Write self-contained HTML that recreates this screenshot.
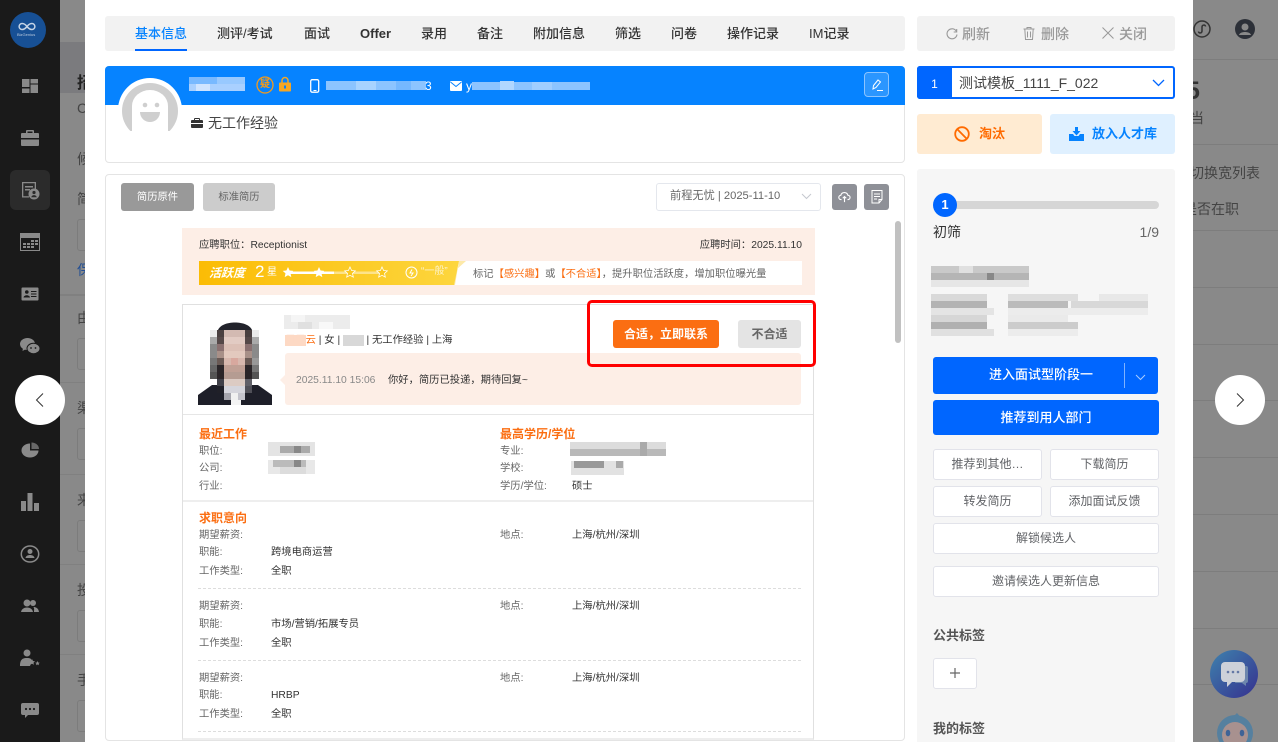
<!DOCTYPE html>
<html><head><meta charset="utf-8"><style>
html,body{margin:0;padding:0;width:1278px;height:742px;overflow:hidden;background:#898989}
body{font-family:"Liberation Sans","Noto Sans CJK SC",sans-serif;position:relative}
div,svg{position:absolute;box-sizing:border-box}
.t{position:absolute;white-space:nowrap;line-height:16px;height:16px}
.l{font-size:10.3px;color:#666;margin-top:2px}
.v{font-size:10.3px;color:#333;margin-top:2px}
.h{font-size:12px;color:#fb6e12;font-weight:700}
.tab{font-size:13px;color:#333;font-weight:500;top:26px}
.tool{font-size:14px;color:#999;font-weight:500;top:26px}
.btn{background:#fff;border:1px solid #e2e3ea;border-radius:3px;text-align:center;font-size:12px;color:#606266;line-height:28px;white-space:nowrap}
.ln{left:1193px;width:85px;height:1px;background:#7d7d7d}
.sl{left:60px;width:25px;height:1px;background:#808080}
.ip{left:77px;width:12px;height:32px;border:1px solid #7c7c7c;border-radius:3px}
.sg{font-size:14px;color:#444;left:77px}
.ic{left:20px;width:20px;height:20px;fill:#8a8a8a}
</style></head><body>

<!-- dimmed page right -->
<div class="ln" style="top:59px"></div><div class="ln" style="top:144px"></div><div class="ln" style="top:230px"></div>
<div class="ln" style="top:287px"></div><div class="ln" style="top:344px"></div><div class="ln" style="top:400px"></div>
<div class="ln" style="top:457px"></div><div class="ln" style="top:514px"></div><div class="ln" style="top:571px"></div><div class="ln" style="top:628px"></div><div class="ln" style="top:684px"></div>
<div class="t" style="left:1186px;top:81px;font-size:25px;color:#333;font-weight:700;line-height:20px;height:20px">5</div>
<div class="t" style="left:1190px;top:110px;font-size:14px;color:#444">当</div>
<div class="t" style="left:1190px;top:165px;font-size:14px;color:#444">切换宽列表</div>
<div class="t" style="left:1183px;top:201px;font-size:14px;color:#444">是否在职</div>
<svg style="left:1193px;top:19px" width="20" height="20" viewBox="0 0 20 20" fill="none" stroke="#333" stroke-width="1.5"><circle cx="9" cy="10" r="8"/><path d="M5.500 12.500c0 2 3.500 2 3.500-.5V8c0-2.500 3.500-2.500 3.500-.5"/></svg>
<svg style="left:1235px;top:19px" width="20" height="20" viewBox="0 0 20 20"><circle cx="10" cy="10" r="10" fill="#2c3038"/><circle cx="10" cy="8" r="3.500" fill="#898989"/><path d="M4 16c1-4 11-4 12 0z" fill="#898989"/></svg>
<svg style="left:1210px;top:650px" width="48" height="48" viewBox="0 0 48 48"><defs><linearGradient id="cg" x1="0" y1="0" x2="1" y2="1"><stop offset="0" stop-color="#3f82ad"/><stop offset="1" stop-color="#35308f"/></linearGradient></defs><circle cx="24" cy="24" r="24" fill="url(#cg)"/><path d="M30 16h6a2 2 0 0 1 2 2v13a2 2 0 0 1-2 2v3l-4-3h-7z" fill="#6d86ad"/><rect x="11" y="12" width="24" height="20" rx="4" fill="#cdd1d9"/><path d="M17 31v6l6-6z" fill="#cdd1d9"/><circle cx="18" cy="22" r="1.300" fill="#6478a5"/><circle cx="23" cy="22" r="1.300" fill="#6478a5"/><circle cx="28" cy="22" r="1.300" fill="#6478a5"/></svg>
<svg style="left:1217px;top:713px" width="36" height="29" viewBox="0 0 36 29"><circle cx="18" cy="20" r="18" fill="#55809f"/><path d="M20 0l5 6h-11z" fill="#55809f"/><circle cx="18" cy="22" r="13" fill="#a8918f"/><ellipse cx="11" cy="20" rx="2.300" ry="3.300" fill="#3f6396"/><ellipse cx="25" cy="20" rx="2.300" ry="3.300" fill="#3f6396"/></svg>

<!-- dimmed left sliver -->
<div style="left:60px;top:42px;width:25px;height:51px;background:#7b7b7e"></div>
<div class="t" style="left:77px;top:76px;font-size:16px;font-weight:700;color:#222">招</div>
<div class="t" style="left:77px;top:100px;font-size:14px;color:#444">C</div>
<div class="t sg" style="top:151px">候</div>
<div class="t sg" style="top:191px">简</div>
<div class="ip" style="top:219px"></div>
<div class="t sg" style="top:262px;color:#234f94">保</div>
<div class="sl" style="top:294px;height:2px"></div>
<div class="t sg" style="top:310px">由</div><div class="ip" style="top:338px"></div><div class="sl" style="top:382px"></div>
<div class="t sg" style="top:400px">渠</div><div class="ip" style="top:428px"></div><div class="sl" style="top:474px"></div>
<div class="t sg" style="top:492px">来</div><div class="ip" style="top:520px"></div><div class="sl" style="top:564px"></div>
<div class="t sg" style="top:582px">投</div><div class="ip" style="top:610px"></div><div class="sl" style="top:654px"></div>
<div class="t sg" style="top:672px">手</div><div class="ip" style="top:700px"></div>

<!-- sidebar -->
<div style="left:0;top:0;width:60px;height:742px;background:#1a1a1a"></div>
<div style="left:10px;top:12px;width:36px;height:36px;border-radius:50%;background:#175095"></div>
<svg style="left:17px;top:22px" width="20" height="9" viewBox="0 0 24 12" fill="none" stroke="#c5d4e6" stroke-width="2"><path d="M12 6C9 2 7 2 5.500 2a4 4 0 0 0 0 8c1.500 0 3.500 0 6.500-4s5-4 6.500-4a4 4 0 0 1 0 8c-1.500 0-3.500 0-6.500-4z"/></svg>
<div class="t" style="left:17px;top:27px;font-size:4px;color:#b9c9dd">BizGenius</div>
<div style="left:10px;top:170px;width:40px;height:40px;border-radius:6px;background:#2b2b2b"></div>

<svg class="ic" style="top:76px" viewBox="0 0 20 20"><rect x="2" y="3" width="7.500" height="8"/><rect x="2" y="12.500" width="7.500" height="4.500"/><rect x="10.500" y="3" width="7.500" height="4.500"/><rect x="10.500" y="8.500" width="7.500" height="8.500"/></svg>
<svg class="ic" style="top:128px" viewBox="0 0 20 20"><path d="M7 2h6a1 1 0 0 1 1 1v2h4a1 1 0 0 1 1 1v4H1V6a1 1 0 0 1 1-1h4V3a1 1 0 0 1 1-1zm.500 1.500V5h5V3.500zM1 11.500h18V17a1 1 0 0 1-1 1H2a1 1 0 0 1-1-1z"/></svg>
<svg class="ic" style="top:180px" viewBox="0 0 20 20"><path d="M2 2h14v8h-1.300V3.300H3.300v12.900H9v1.300H2z"/><rect x="5" y="6" width="8" height="1.500"/><rect x="5" y="9" width="5" height="1.500"/><circle cx="14" cy="14" r="5.500"/><circle cx="14" cy="12.500" r="1.600" fill="#2b2b2b"/><path d="M11.300 17.200c.5-2.800 4.900-2.800 5.400 0z" fill="#2b2b2b"/></svg>
<svg class="ic" style="top:232px" viewBox="0 0 20 20"><path d="M0 1h20v18H0zm1 5v12h18V6z"/><path d="M3 11h3v2H3zM3 14h3v2H3zM7 14h3v2H7zM7 11h3v2H7zM11 8h3v2h-3zM15 8h3v2h-3zM11 11h3v2h-3zM15 11h3v2h-3zM11 14h3v2h-3z"/></svg>
<svg class="ic" style="top:284px" viewBox="0 0 20 20"><path d="M2.500 3.500h15a1 1 0 0 1 1 1v11a1 1 0 0 1-1 1h-15a1 1 0 0 1-1-1v-11a1 1 0 0 1 1-1z"/><circle cx="6.800" cy="8" r="1.800" fill="#1a1a1a"/><path d="M3.500 13.500c.5-3 6-3 6.500 0z" fill="#1a1a1a"/><path d="M11 7h5.500v1H11zM11 9.500h5.500v1H11zM11 12h5.500v1H11z" fill="#1a1a1a"/></svg>
<svg class="ic" style="top:336px" viewBox="0 0 20 20"><ellipse cx="7.500" cy="8" rx="7.500" ry="6"/><path d="M3 12l-.5 3 3.500-2z"/><ellipse cx="13.500" cy="12.500" rx="6.500" ry="5.200" stroke="#1a1a1a" stroke-width="1"/><circle cx="11" cy="12" r=".9" fill="#1a1a1a"/><circle cx="15.500" cy="12" r=".9" fill="#1a1a1a"/></svg>
<svg class="ic" style="top:440px" viewBox="0 0 20 20"><path d="M10 3.500A8.500 7 0 1 0 18.500 10.500H10z"/><path d="M11.500 2.500a7.500 6.500 0 0 1 7.500 6.500h-7.500z" opacity=".7"/></svg>
<svg class="ic" style="top:492px" viewBox="0 0 20 20"><rect x="1" y="9" width="5" height="10"/><rect x="7.500" y="1" width="5" height="18"/><rect x="14" y="11" width="5" height="8"/></svg>
<svg class="ic" style="top:544px" viewBox="0 0 20 20"><ellipse cx="10" cy="10" rx="8.700" ry="8" fill="none" stroke="#8a8a8a" stroke-width="1.500"/><circle cx="10" cy="7.500" r="2.500"/><path d="M5.500 14c.5-4 8.500-4 9 0z"/></svg>
<svg class="ic" style="top:596px" viewBox="0 0 20 20"><circle cx="7" cy="7" r="3.500"/><path d="M1 16c1-6 11-6 12 0z"/><circle cx="13" cy="7" r="3"/><path d="M14 16h5c-.5-4-3.500-5-5.500-5 1 1.500.5 3.500.5 5z"/></svg>
<svg class="ic" style="top:648px" viewBox="0 0 20 20"><circle cx="7" cy="5" r="3.500"/><path d="M0 18c0-7 3-8 7-8s4 1 5 3l-2 5z"/><path d="M12 11l1 2 2 .3-1.500 1.400.4 2-1.900-1-1.900 1 .4-2L9 13.300l2-.3zM17.500 13l.7 1.500 1.600.2-1.200 1 .3 1.600-1.400-.8-1.400.8.300-1.600-1.200-1 1.600-.2z"/></svg>
<svg class="ic" style="top:700px" viewBox="0 0 20 20"><path d="M3 3h14a2 2 0 0 1 2 2v8a2 2 0 0 1-2 2h-9l-3 3v-3H3a2 2 0 0 1-2-2V5a2 2 0 0 1 2-2z"/><circle cx="6" cy="9" r="1.100" fill="#1a1a1a"/><circle cx="10" cy="9" r="1.100" fill="#1a1a1a"/><circle cx="14" cy="9" r="1.100" fill="#1a1a1a"/></svg>

<!-- modal -->
<div style="left:85px;top:0;width:1108px;height:742px;background:#fff"></div>

<!-- tabs -->
<div style="left:105px;top:16px;width:800px;height:35px;background:#f2f2f2;border-radius:3px"></div>
<div class="t tab" style="left:135px;color:#0683ff">基本信息</div>
<div style="left:135px;top:49px;width:52px;height:2px;background:#0066ff"></div>
<div class="t tab" style="left:217px">测评/考试</div>
<div class="t tab" style="left:304px">面试</div>
<div class="t tab" style="left:360px;font-weight:700">Offer</div>
<div class="t tab" style="left:421px">录用</div>
<div class="t tab" style="left:477px">备注</div>
<div class="t tab" style="left:533px">附加信息</div>
<div class="t tab" style="left:615px">筛选</div>
<div class="t tab" style="left:671px">问卷</div>
<div class="t tab" style="left:727px">操作记录</div>
<div class="t tab" style="left:809px">IM记录</div>

<div style="left:917px;top:16px;width:258px;height:35px;background:#f2f2f2;border-radius:3px"></div>
<svg style="left:945px;top:27px" width="14" height="14" viewBox="0 0 14 14" fill="none" stroke="#999" stroke-width="1.100"><path d="M11.500 4.500A5 5 0 1 0 12 7.500M11.700 2v3h-3"/></svg>
<div class="t tool" style="left:962px">刷新</div>
<svg style="left:1022px;top:26px" width="14" height="15" viewBox="0 0 14 15" fill="none" stroke="#999" stroke-width="1"><path d="M1.500 3h11M5 3V1.500h4V3M2.800 3l.7 10.500h7L11.200 3M5.500 5.500v6M8.500 5.500v6"/></svg>
<div class="t tool" style="left:1041px">删除</div>
<svg style="left:1102px;top:27px" width="12" height="12" viewBox="0 0 12 12" fill="none" stroke="#999" stroke-width="1"><path d="M.5.500l11 11M11.500.500l-11 11"/></svg>
<div class="t tool" style="left:1119px">关闭</div>

<!-- candidate card -->
<div style="left:105px;top:66px;width:800px;height:97px;border:1px solid #e4e4e4;border-radius:4px"></div>
<div style="left:105px;top:66px;width:800px;height:39px;background:#0683ff;border-radius:4px 4px 0 0"></div>
<svg style="left:118px;top:78px" width="64" height="53" viewBox="0 0 64 53"><circle cx="32" cy="32" r="32" fill="#fff"/><rect x="0" y="41" width="64" height="12" fill="#fff"/><path d="M12.400 53A28 28 0 1 1 51.600 53z" fill="#cfcfcf"/><path d="M14 53V28a18 16 0 0 1 36 0v25z" fill="#fff"/><circle cx="27" cy="27" r="2.300" fill="#cfcfcf"/><circle cx="39" cy="27" r="2.300" fill="#cfcfcf"/><path d="M22 34h20a10 10 0 0 1-20 0z" fill="#cfcfcf"/></svg>
<svg style="left:189px;top:76px" width="60" height="20"><g fill="#a9d0ff"><rect x="0" y="1" width="28" height="7" opacity=".7"/><rect x="28" y="1" width="28" height="7" opacity=".9"/><rect x="0" y="8" width="56" height="7"/><rect x="7" y="8" width="14" height="7" fill="#cfe4ff"/></g></svg>
<svg style="left:256px;top:76px" width="18" height="18" viewBox="0 0 18 18"><circle cx="9" cy="9" r="8" fill="none" stroke="#f39a1b" stroke-width="1.300"/></svg>
<div class="t" style="left:260px;top:77px;font-size:10px;color:#f39a1b;font-weight:700">疑</div>
<svg style="left:279px;top:76px" width="12" height="16" viewBox="0 0 12 16"><path d="M3 7V4.500a3 3 0 0 1 6 0V7" fill="none" stroke="#f5a623" stroke-width="1.500"/><rect y="6.500" width="12" height="9" rx="1" fill="#f5a623"/><rect x="5" y="9.500" width="2" height="3" fill="#0683ff"/></svg>
<svg style="left:310px;top:79px" width="10" height="14" viewBox="0 0 10 14"><rect x=".7" y=".7" width="8" height="12.500" rx="1.500" fill="none" stroke="#fff" stroke-width="1.300"/><rect x="3.500" y="11" width="3" height="1" fill="#fff"/></svg>
<svg style="left:326px;top:80px" width="106" height="12"><rect x="0" y="1" width="100" height="9" fill="#8cc4ff"/><rect x="30" y="1" width="20" height="9" fill="#a8d3ff"/><rect x="70" y="1" width="15" height="9" fill="#75b8ff"/></svg>
<div class="t" style="left:425px;top:78px;font-size:12px;color:#fff">3</div>
<svg style="left:450px;top:81px" width="12" height="10" viewBox="0 0 12 10"><rect width="12" height="10" rx="1" fill="#fff"/><path d="M.5 1L6 5.500 11.500 1" fill="none" stroke="#0683ff" stroke-width="1"/></svg>
<div class="t" style="left:466px;top:78px;font-size:12px;color:#fff">y</div>
<svg style="left:472px;top:80px" width="118" height="12"><rect x="0" y="2" width="118" height="8" fill="#8cc4ff"/><rect x="28" y="1" width="14" height="9" fill="#b0d7ff"/><rect x="60" y="2" width="20" height="8" fill="#a0ceff"/></svg>
<div style="left:864px;top:72px;width:25px;height:25px;border:1px solid #8cc4ff;border-radius:4px;background:#2b96ff"></div>
<svg style="left:870px;top:78px" width="14" height="14" viewBox="0 0 14 14" fill="none" stroke="#fff" stroke-width="1"><path d="M3 11l.5-3.500L8 2l2.500 2L6 9.500zM7 12.500h6"/></svg>
<svg style="left:191px;top:118px" width="12" height="10" viewBox="0 0 12 10"><path d="M4 0h4a1 1 0 0 1 1 1v1h2a1 1 0 0 1 1 1v2H0V3a1 1 0 0 1 1-1h2V1a1 1 0 0 1 1-1zm0 1v1h4V1zM0 6h12v3a1 1 0 0 1-1 1H1a1 1 0 0 1-1-1z" fill="#333"/></svg>
<div class="t" style="left:208px;top:115px;font-size:14px;color:#444">无工作经验</div>

<!-- resume card -->
<div style="left:105px;top:174px;width:800px;height:567px;border:1px solid #e4e4e4;border-radius:4px"></div>
<div style="left:121px;top:183px;width:73px;height:28px;background:#999;border-radius:3px;color:#fff;font-size:10.300px;text-align:center;line-height:29px">简历原件</div>
<div style="left:203px;top:183px;width:72px;height:28px;background:#ccc;border-radius:3px;color:#666;font-size:10.300px;text-align:center;line-height:29px">标准简历</div>
<div style="left:656px;top:183px;width:165px;height:28px;border:1px solid #e4e7ed;border-radius:3px"></div>
<div class="t" style="left:670px;top:188px;font-size:11.200px;color:#666">前程无忧 | 2025-11-10</div>
<svg style="left:801px;top:193px" width="11" height="7" viewBox="0 0 11 7" fill="none" stroke="#c5c8cf" stroke-width="1"><path d="M1 1l4.500 4.500L10 1"/></svg>
<div style="left:832px;top:184px;width:25px;height:26px;background:#8e9097;border-radius:3px"></div>
<svg style="left:838px;top:191px" width="13" height="12" viewBox="0 0 15 14" fill="none" stroke="#fff" stroke-width="1.300"><path d="M4 10H3.500a2.500 2.500 0 0 1-.3-5 4.300 4.300 0 0 1 8.300 0 2.500 2.500 0 0 1 0 5H11M7.500 6.500V13M5.500 8.500l2-2 2 2"/></svg>
<div style="left:864px;top:184px;width:25px;height:26px;background:#8e9097;border-radius:3px"></div>
<svg style="left:871px;top:190px" width="12" height="14" viewBox="0 0 12 14" fill="none" stroke="#fff" stroke-width="1"><path d="M1 .5h10v9L8 13H1zM3 4h6M3 6.500h6M3 9h3M11 9.500H8V13"/></svg>
<div style="left:895px;top:221px;width:6px;height:122px;background:#c1c1c1;border-radius:3px"></div>

<!-- resume top banner -->
<div style="left:182px;top:228px;width:633px;height:67px;background:#fdeee6"></div>
<div class="t" style="left:199px;top:237px;font-size:10.300px;color:#333;margin-top:1px">应聘职位&#65306;Receptionist</div>
<div class="t" style="right:476px;top:237px;font-size:10.300px;color:#333;margin-top:1px">应聘时间&#65306;2025.11.10</div>
<div style="left:199px;top:261px;width:603px;height:24px;background:#fff"></div>
<svg style="left:199px;top:261px" width="270" height="24" viewBox="0 0 270 24"><defs><linearGradient id="gb" x1="0" x2="1"><stop offset="0" stop-color="#fbbc05"/><stop offset="1" stop-color="#fdd63e"/></linearGradient></defs><path d="M267 0L258 8 250 24h6l4-24z" fill="#fde9a8"/><path d="M0 0h260l-5 24H0z" fill="url(#gb)"/></svg>
<div class="t" style="left:209px;top:265px;font-size:12px;color:#fff;font-weight:700;font-style:italic">活跃度</div>
<div class="t" style="left:255px;top:264px;font-size:17px;color:#fff">2</div>
<div class="t" style="left:267px;top:265px;font-size:10px;color:#fff">星</div>
<svg style="left:282px;top:266px" width="108" height="14" viewBox="0 0 108 14"><rect x="8" y="5.500" width="90" height="2.500" fill="#fde38a"/><rect x="8" y="5.500" width="44" height="2.500" fill="#fff"/><g fill="#fff"><path d="M6 1l1.600 3.500 3.700.4-2.800 2.500.8 3.700L6 9.300l-3.300 1.800.8-3.700L.7 4.900l3.700-.4z"/><path transform="translate(31)" d="M6 1l1.600 3.500 3.700.4-2.800 2.500.8 3.700L6 9.300l-3.300 1.800.8-3.700L.7 4.900l3.700-.4z"/></g><g fill="#fbc81e" stroke="#fff" stroke-width=".8"><path transform="translate(62)" d="M6 1l1.600 3.500 3.700.4-2.800 2.500.8 3.700L6 9.300l-3.300 1.800.8-3.700L.7 4.900l3.700-.4z"/><path transform="translate(94)" d="M6 1l1.600 3.500 3.700.4-2.800 2.500.8 3.700L6 9.300l-3.300 1.800.8-3.700L.7 4.900l3.700-.4z"/></g></svg>
<svg style="left:405px;top:266px" width="13" height="13" viewBox="0 0 13 13" fill="none" stroke="#fff" stroke-width="1"><circle cx="6.500" cy="6.500" r="5.500"/><path d="M7 3.500L5 7h3l-2 3"/></svg>
<div class="t" style="left:421px;top:264px;font-size:10px;color:#fdf3c8">“一般”</div>
<div class="t" style="left:473px;top:267px;font-size:10.300px;color:#666">标记<span style="color:#fb6e12">【感兴趣】</span>或<span style="color:#fb6e12">【不合适】</span>&#65292;提升职位活跃度&#65292;增加职位曝光量</div>

<!-- resume box -->
<div style="left:182px;top:304px;width:632px;height:436px;border:1px solid #e0e0e0;border-bottom:2px solid #eee"></div>
<div style="left:183px;top:414px;width:630px;height:1px;background:#e6e6e6"></div>
<div style="left:183px;top:500px;width:630px;height:2px;background:#eee"></div>

<!-- photo -->
<svg style="left:198px;top:320px" width="74" height="85" viewBox="0 0 74 85"><path d="M20 10C24 0 50 0 54 10v40H20z" fill="#22232b"/><path d="M0 85V75L14 65h46l14 10v10z" fill="#1e1f29"/><rect x="33" y="70" width="10" height="15" fill="#f4f4f4"/>
<path d="M12 10h7v7h-7z" fill="#ececec"/><path d="M19 10h7v7h-7zM47 10h7v7h-7z" fill="#4a4040"/><path d="M26 10h21v7H26z" fill="#d3bab2"/><path d="M54 10h7v7h-7z" fill="#eaeaea"/>
<path d="M12 17h7v7h-7zM54 17h7v7h-7z" fill="#aaa"/><path d="M19 17h7v7h-7zM47 17h7v7h-7z" fill="#554848"/><path d="M26 17h21v7H26z" fill="#e2cbc3"/>
<path d="M12 24h7v7h-7zM54 24h7v7h-7z" fill="#8a8a8a"/><path d="M19 24h7v7h-7zM47 24h7v7h-7z" fill="#8a7070"/><path d="M26 24h21v7H26z" fill="#dcc0b6"/>
<path d="M12 31h7v7h-7zM54 31h7v7h-7z" fill="#8a8a8a"/><path d="M19 31h7v7h-7zM47 31h7v7h-7z" fill="#a89088"/><path d="M26 31h21v7H26z" fill="#e3c9be"/>
<path d="M12 38h7v7h-7z" fill="#777"/><path d="M54 38h7v7h-7z" fill="#999"/><path d="M19 38h7v7h-7zM47 38h7v7h-7z" fill="#6a5a55"/><path d="M26 38h7v7h-7zM40 38h7v7h-7z" fill="#d8b8ae"/><path d="M33 38h7v7h-7z" fill="#d8a89e"/>
<path d="M12 45h7v7h-7z" fill="#666"/><path d="M54 45h7v7h-7z" fill="#777"/><path d="M19 45h7v7h-7zM47 45h7v7h-7z" fill="#2a2528"/><path d="M26 45h21v7H26z" fill="#c0a095"/>
<path d="M12 52h7v7h-7zM54 52h7v7h-7z" fill="#555"/><path d="M19 52h7v7h-7zM47 52h7v7h-7z" fill="#2a2528"/><path d="M26 52h21v7H26z" fill="#b59c92"/>
<path d="M19 59h7v7h-7z" fill="#404048"/><path d="M47 59h7v7h-7z" fill="#606068"/><path d="M26 59h21v7H26z" fill="#dccbc3"/>
<path d="M19 66h7v7h-7z" fill="#202028"/><path d="M47 66h7v7h-7z" fill="#505058"/><path d="M26 66h21v7H26z" fill="#d5d5dc"/>
<path d="M26 73h7v7h-7z" fill="#a5a5ad"/><path d="M33 73h7v7h-7z" fill="#f0f0f0"/><path d="M40 73h7v7h-7z" fill="#c4c4cc"/></svg>

<svg style="left:284px;top:315px" width="66" height="14"><rect width="66" height="14" fill="#ececec"/><rect x="7" y="0" width="14" height="7" fill="#f5f5f5"/><rect x="35" y="7" width="14" height="7" fill="#f8f8f8"/><rect x="14" y="7" width="14" height="7" fill="#e0e0e0"/></svg>
<div class="t" style="left:285px;top:333px;font-size:10.300px;color:#333;white-space:pre"><span style="color:#fb6e12"><span style="background:#fdd9c4;color:#fdd9c4">周周</span>云</span> | 女 | <span style="color:transparent;background:#d8d8d8">周周</span> | 无工作经验 | 上海</div>
<div style="left:285px;top:353px;width:516px;height:52px;background:#fdeee6;border-radius:3px"></div>
<div style="left:280px;top:375px;width:0;height:0;border:5px solid transparent;border-right-color:#fdeee6;border-left:0"></div>
<div class="t" style="left:296px;top:373px;font-size:10.300px;color:#888">2025.11.10 15:06</div>
<div class="t" style="left:388px;top:373px;font-size:10.300px;color:#333">你好&#65292;简历已投递&#65292;期待回复~</div>
<div style="left:613px;top:320px;width:106px;height:28px;background:#fb6e12;border-radius:3px;color:#fff;font-size:12px;font-weight:700;text-align:center;line-height:28px;white-space:nowrap">合适&#65292;立即联系</div>
<div style="left:738px;top:320px;width:63px;height:28px;background:#e4e4e4;border-radius:3px;color:#666;font-size:12px;font-weight:700;text-align:center;line-height:28px">不合适</div>
<div style="left:587px;top:300px;width:229px;height:67px;border:3px solid #ff0000;border-radius:5px"></div>

<!-- sections -->
<div class="t h" style="left:199px;top:426px">最近工作</div>
<div class="t h" style="left:500px;top:426px">最高学历/学位</div>
<div class="t l" style="left:199px;top:442px">职位:</div>
<div class="t l" style="left:199px;top:459px">公司:</div>
<div class="t l" style="left:199px;top:477px">行业:</div>
<div class="t l" style="left:500px;top:442px">专业:</div>
<div class="t l" style="left:500px;top:459px">学校:</div>
<div class="t l" style="left:500px;top:477px">学历/学位:</div>
<div class="t v" style="left:572px;top:477px">硕士</div>
<svg style="left:268px;top:442px" width="47" height="14"><rect width="47" height="14" fill="#e4e4e4"/><rect x="12" y="4" width="30" height="7" fill="#aaa"/><rect x="26" y="4" width="7" height="7" fill="#888"/></svg>
<svg style="left:268px;top:460px" width="47" height="14"><rect width="47" height="14" fill="#e8e8e8"/><rect x="5" y="0" width="33" height="7" fill="#bbb"/><rect x="26" y="0" width="7" height="7" fill="#888"/><rect x="12" y="7" width="26" height="7" fill="#dcdcdc"/></svg>
<svg style="left:570px;top:442px" width="96" height="14"><rect width="96" height="14" fill="#dcdcdc"/><rect x="0" y="7" width="96" height="7" fill="#b9b9b9"/><rect x="70" y="0" width="7" height="14" fill="#aaa"/></svg>
<svg style="left:571px;top:461px" width="53" height="14"><rect width="53" height="14" fill="#e2e2e2"/><rect x="3" y="0" width="30" height="7" fill="#999"/><rect x="45" y="0" width="7" height="7" fill="#aaa"/></svg>

<div class="t h" style="left:199px;top:510px">求职意向</div>
<div class="t l" style="left:199px;top:526px">期望薪资:</div><div class="t l" style="left:500px;top:526px">地点:</div><div class="t v" style="left:572px;top:526px">上海/杭州/深圳</div>
<div class="t l" style="left:199px;top:543px">职能:</div><div class="t v" style="left:271px;top:543px">跨境电商运营</div>
<div class="t l" style="left:199px;top:562px">工作类型:</div><div class="t v" style="left:271px;top:562px">全职</div>
<div style="left:198px;top:588px;width:603px;border-top:1px dashed #ddd"></div>
<div class="t l" style="left:199px;top:597px">期望薪资:</div><div class="t l" style="left:500px;top:597px">地点:</div><div class="t v" style="left:572px;top:597px">上海/杭州/深圳</div>
<div class="t l" style="left:199px;top:615px">职能:</div><div class="t v" style="left:271px;top:615px">市场/营销/拓展专员</div>
<div class="t l" style="left:199px;top:634px">工作类型:</div><div class="t v" style="left:271px;top:634px">全职</div>
<div style="left:198px;top:660px;width:603px;border-top:1px dashed #ddd"></div>
<div class="t l" style="left:199px;top:669px">期望薪资:</div><div class="t l" style="left:500px;top:669px">地点:</div><div class="t v" style="left:572px;top:669px">上海/杭州/深圳</div>
<div class="t l" style="left:199px;top:686px">职能:</div><div class="t v" style="left:271px;top:686px">HRBP</div>
<div class="t l" style="left:199px;top:705px">工作类型:</div><div class="t v" style="left:271px;top:705px">全职</div>
<div style="left:198px;top:731px;width:603px;border-top:1px dashed #ddd"></div>

<!-- right column -->
<div style="left:917px;top:66px;width:258px;height:33px;border:2px solid #0066ff;border-radius:3px"></div>
<div style="left:917px;top:66px;width:35px;height:33px;background:#0066ff;border-radius:3px 0 0 3px;color:#fff;font-size:12px;text-align:center;line-height:36px">1</div>
<div class="t" style="left:959px;top:75px;font-size:14px;color:#444">测试模板_1111_F_022</div>
<svg style="left:1152px;top:79px" width="13" height="8" viewBox="0 0 13 8" fill="none" stroke="#0066ff" stroke-width="1.300"><path d="M1 1l5.500 5.500L12 1"/></svg>
<div style="left:917px;top:114px;width:125px;height:40px;background:#ffebd2;border-radius:3px"></div>
<svg style="left:954px;top:126px" width="16" height="16" viewBox="0 0 16 16" fill="none" stroke="#ff6a00" stroke-width="1.800"><circle cx="8" cy="8" r="6.800"/><path d="M3.300 3.300l9.400 9.400"/></svg>
<div class="t" style="left:979px;top:126px;font-size:13px;color:#ff6a00;font-weight:700">淘汰</div>
<div style="left:1050px;top:114px;width:125px;height:40px;background:#dff0ff;border-radius:3px"></div>
<svg style="left:1069px;top:127px" width="15" height="14" viewBox="0 0 15 14"><path d="M0 7h4l1.500 2h4L11 7h4v7H0z" fill="#0683ff"/><path d="M6 0h3v4h2.500L7.500 8.500 3.500 4H6z" fill="#0683ff"/></svg>
<div class="t" style="left:1092px;top:126px;font-size:13px;color:#0683ff;font-weight:700">放入人才库</div>

<div style="left:917px;top:169px;width:258px;height:573px;background:#f6f6f6;border-radius:3px 3px 0 0"></div>
<div style="left:945px;top:201px;width:214px;height:8px;background:#d6d6d6;border-radius:4px"></div>
<div style="left:933px;top:193px;width:24px;height:24px;background:#0066ff;border-radius:50%;color:#fff;font-size:13px;font-weight:700;text-align:center;line-height:24px">1</div>
<div class="t" style="left:933px;top:224px;font-size:14px;color:#333">初筛</div>
<div class="t" style="right:119px;top:224px;font-size:14px;color:#666">1/9</div>
<svg style="left:931px;top:266px" width="100" height="21"><rect width="98" height="7" fill="#c9c9c9"/><rect y="7" width="98" height="7" fill="#b5b5b5"/><rect y="14" width="98" height="7" fill="#e6e6e6"/><rect x="28" y="0" width="14" height="7" fill="#e0e0e0"/><rect x="56" y="7" width="7" height="7" fill="#888"/></svg>
<svg style="left:931px;top:294px" width="220" height="42"><rect width="56" height="7" fill="#d9d9d9"/><rect y="7" width="56" height="7" fill="#b3b3b3"/><rect y="14" width="63" height="7" fill="#e4e4e4"/><rect y="21" width="56" height="7" fill="#d6d6d6"/><rect y="28" width="56" height="7" fill="#b0b0b0"/><rect y="35" width="63" height="7" fill="#e0e0e0"/><rect x="77" width="70" height="7" fill="#dedede"/><rect x="77" y="7" width="60" height="7" fill="#bbb"/><rect x="77" y="14" width="140" height="7" fill="#ececec"/><rect x="140" y="7" width="77" height="7" fill="#d8d8d8"/><rect x="168" width="49" height="7" fill="#e8e8e8"/><rect x="77" y="21" width="60" height="7" fill="#eaeaea"/><rect x="77" y="28" width="70" height="7" fill="#ccc"/><rect x="77" y="35" width="70" height="7" fill="#ececec"/></svg>

<div style="left:933px;top:357px;width:225px;height:37px;background:#0066ff;border-radius:3px"></div>
<div class="t" style="left:989px;top:367px;font-size:13px;color:#fff;font-weight:500">进入面试型阶段一</div>
<div style="left:1124px;top:363px;width:1px;height:25px;background:#7fb2ff"></div>
<svg style="left:1135px;top:374px" width="11" height="7" viewBox="0 0 11 7" fill="none" stroke="#a8ccff" stroke-width="1"><path d="M1 1l4.500 4.500L10 1"/></svg>
<div style="left:933px;top:400px;width:226px;height:35px;background:#0066ff;border-radius:3px;color:#fff;font-size:13px;font-weight:500;text-align:center;line-height:35px">推荐到用人部门</div>

<div class="btn" style="left:933px;top:449px;width:109px;height:31px">推荐到其他…</div>
<div class="btn" style="left:1050px;top:449px;width:109px;height:31px">下载简历</div>
<div class="btn" style="left:933px;top:486px;width:109px;height:31px">转发简历</div>
<div class="btn" style="left:1050px;top:486px;width:109px;height:31px">添加面试反馈</div>
<div class="btn" style="left:933px;top:523px;width:226px;height:31px">解锁候选人</div>
<div class="btn" style="left:933px;top:566px;width:226px;height:31px">邀请候选人更新信息</div>
<div class="t" style="left:933px;top:628px;font-size:13px;color:#555;font-weight:700">公共标签</div>
<div class="btn" style="left:933px;top:658px;width:44px;height:31px"></div>
<svg style="left:949px;top:667px" width="12" height="12" viewBox="0 0 12 12" stroke="#666" stroke-width="1.200"><path d="M6 1v10M1 6h10"/></svg>
<div class="t" style="left:933px;top:721px;font-size:13px;color:#555;font-weight:700">我的标签</div>

<!-- nav arrows -->
<div style="left:15px;top:375px;width:50px;height:50px;border-radius:50%;background:#fff"></div>
<svg style="left:35px;top:393px" width="9" height="14" viewBox="0 0 9 14" fill="none" stroke="#333" stroke-width="1"><path d="M8 .5L1.500 7 8 13.500"/></svg>
<div style="left:1215px;top:375px;width:50px;height:50px;border-radius:50%;background:#fff"></div>
<svg style="left:1236px;top:393px" width="9" height="14" viewBox="0 0 9 14" fill="none" stroke="#333" stroke-width="1"><path d="M1 .5L7.500 7 1 13.500"/></svg>

</body></html>
